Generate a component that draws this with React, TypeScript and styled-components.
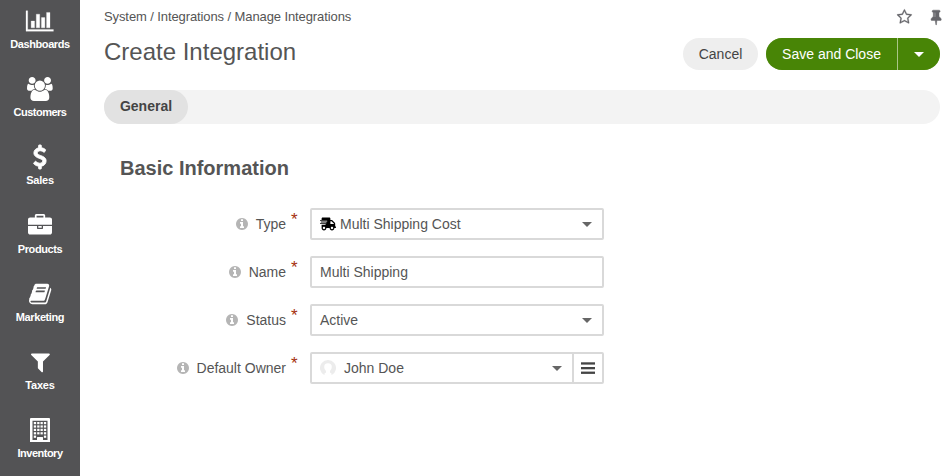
import React from 'react';
import styled, { createGlobalStyle } from 'styled-components';
import { FaShippingFast } from 'react-icons/fa';

const GlobalStyle = createGlobalStyle`
  * { box-sizing: border-box; }
  body { margin: 0; background: #fff; overflow: hidden; }
  body, button, input { font-family: "Liberation Sans", Arial, sans-serif; }
`;

/* Glyphs are drawn on a 1792-unit em square with the baseline at 1536. */
const glyphs = {
  chart: { w: 2048, d: 'M640 640v-512h-256v512h256zM1024 1152v-1024h-256v1024h256zM2048 0v-128h-2048v1536h128v-1408h1920zM1408 896v-768h-256v768h256zM1792 1280v-1152h-256v1152h256z' },
  users: { w: 1920, d: 'M593 640q-162 -5 -265 -128h-134q-82 0 -138 40.5t-56 118.5q0 353 124 353q6 0 43.5 -21t97.5 -42.5t119 -21.5q67 0 133 23q-5 -37 -5 -66q0 -139 81 -256zM1664 3q0 -120 -73 -189.5t-194 -69.5h-874q-121 0 -194 69.5t-73 189.5q0 53 3.5 103.5t14 109t26.5 108.5t43 97.5t62 81t85.5 53.5t111.5 20q10 0 43 -21.5t73 -48t107 -48t135 -21.5t135 21.5t107 48t73 48t43 21.5q61 0 111.5 -20t85.5 -53.5t62 -81t43 -97.5t26.5 -108.5t14 -109t3.5 -103.5zM640 1280q0 -106 -75 -181t-181 -75t-181 75t-75 181t75 181t181 75t181 -75t75 -181zM1344 896q0 -159 -112.5 -271.5t-271.5 -112.5t-271.5 112.5t-112.5 271.5t112.5 271.5t271.5 112.5t271.5 -112.5t112.5 -271.5zM1920 671q0 -78 -56 -118.5t-138 -40.5h-134q-103 123 -265 128q81 117 81 256q0 29 -5 66q66 -23 133 -23q59 0 119 21.5t97.5 42.5t43.5 21q124 0 124 -353zM1792 1280q0 -106 -75 -181t-181 -75t-181 75t-75 181t75 181t181 75t181 -75t75 -181z' },
  dollar: { w: 1024, d: 'M978 351q0 -153 -99.5 -263.5t-258.5 -136.5v-175q0 -14 -9 -23t-23 -9h-135q-13 0 -22.5 9.5t-9.5 22.5v175q-66 9 -127.5 31t-101.5 44.5t-74 48t-46.5 37.5t-17.5 18q-17 21 -2 41l103 135q7 10 23 12q15 2 24 -9l2 -2q113 -99 243 -125q37 -8 74 -8q81 0 142.5 43t61.5 122q0 28 -15 53t-33.5 42t-58.5 37.5t-66 32t-80 32.5q-39 16 -61.5 25t-61.5 26.5t-62.5 31t-56.5 35.5t-53.5 42.5t-43.5 49t-35.5 58t-21 66.5t-8.5 78q0 138 98 242t255 134v180q0 13 9.5 22.5t22.5 9.5h135q14 0 23 -9t9 -23v-176q57 -6 110.5 -23t87 -33.5t63.5 -37.5t39 -29t15 -14q17 -18 5 -38l-81 -146q-8 -15 -23 -16q-14 -3 -27 7q-3 3 -14.5 12t-39 26.5t-58.5 32t-74.5 26t-85.5 11.5q-95 0 -155 -43t-60 -111q0 -26 8.5 -48t29.5 -41.5t39.5 -33t56 -31t60.5 -27t70 -27.5q53 -20 81 -31.5t76 -35t75.5 -42.5t62 -50t53 -63.5t31.5 -76.5t13 -94z' },
  briefcase: { w: 1792, d: 'M640 1280h512v128h-512v-128zM1792 640v-480q0 -66 -47 -113t-113 -47h-1472q-66 0 -113 47t-47 113v480h672v-160q0 -26 19 -45t45 -19h320q26 0 45 19t19 45v160h672zM1024 640v-128h-256v128h256zM1792 1120v-384h-1792v384q0 66 47 113t113 47h352v160q0 40 28 68t68 28h576q40 0 68 -28t28 -68v-160h352q66 0 113 -47t47 -113z' },
  book: { w: 1664, d: 'M1639 1058q40 -57 18 -129l-275 -906q-19 -64 -76.5 -107.5t-122.5 -43.5h-923q-77 0 -148.5 53.5t-99.5 131.5q-24 67 -2 127q0 4 3 27t4 37q1 8 -3 21.5t-3 19.5q2 11 8 21t16.5 23.5t16.5 23.5q23 38 45 91.5t30 91.5q3 10 0.5 30t-0.5 28q3 11 17 28t17 23q21 36 42 92t25 90q1 9 -2.5 32t0.5 28q4 13 22 30.5t22 22.5q19 26 42.5 84.5t27.5 96.5q1 8 -3 25.5t-2 26.5q2 8 9 18t18 23t17 21q8 12 16.5 30.5t15 35t16 36t19.5 32t26.5 23.5t36 11.5t47.5 -5.5l-1 -3q38 9 51 9h761q74 0 114 -56t18 -130l-274 -906q-36 -119 -71.5 -153.5t-128.5 -34.5h-869q-27 0 -38 -15q-11 -16 -1 -43q24 -70 144 -70h923q29 0 56 15.5t35 41.5l300 987q7 22 5 57q38 -15 59 -43zM575 1056q-4 -13 2 -22.5t20 -9.5h608q13 0 25.5 9.5t16.5 22.5l21 64q4 13 -2 22.5t-20 9.5h-608q-13 0 -25.5 -9.5t-16.5 -22.5zM492 800q-4 -13 2 -22.5t20 -9.5h608q13 0 25.5 9.5t16.5 22.5l21 64q4 13 -2 22.5t-20 9.5h-608q-13 0 -25.5 -9.5t-16.5 -22.5z' },
  filter: { w: 1408, d: 'M1403 1241q17 -41 -14 -70l-493 -493v-742q0 -42 -39 -59q-13 -5 -25 -5q-27 0 -45 19l-256 256q-19 19 -19 45v486l-493 493q-31 29 -14 70q17 39 59 39h1280q42 0 59 -39z' },
  star: { w: 1664, d: 'M1137 532l306 297l-422 62l-189 382l-189 -382l-422 -62l306 -297l-73 -421l378 199l377 -199zM1664 889q0 -22 -26 -48l-363 -354l86 -500q1 -7 1 -20q0 -50 -41 -50q-19 0 -40 12l-449 236l-449 -236q-22 -12 -40 -12q-21 0 -31.5 14.5t-10.5 35.5q0 6 2 20l86 500l-364 354q-25 27 -25 48q0 37 56 46l502 73l225 455q19 41 49 41t49 -41l225 -455l502 -73q56 -9 56 -46z' },
  pin: { w: 1152, d: 'M480 672v448q0 14 -9 23t-23 9t-23 -9t-9 -23v-448q0 -14 9 -23t23 -9t23 9t9 23zM1152 320q0 -26 -19 -45t-45 -19h-429l-51 -483q-2 -12 -10.5 -20.5t-20.5 -8.5h-1q-27 0 -32 27l-76 485h-404q-26 0 -45 19t-19 45q0 123 78.5 221.5t177.5 98.5v512q-52 0 -90 38t-38 90t38 90t90 38h640q52 0 90 -38t38 -90t-38 -90t-90 -38v-512q99 0 177.5 -98.5t78.5 -221.5z' },
  info: { w: 1536, d: 'M1024 160v160q0 14 -9 23t-23 9h-96v512q0 14 -9 23t-23 9h-320q-14 0 -23 -9t-9 -23v-160q0 -14 9 -23t23 -9h96v-320h-96q-14 0 -23 -9t-9 -23v-160q0 -14 9 -23t23 -9h448q14 0 23 9t9 23zM896 1056v160q0 14 -9 23t-23 9h-192q-14 0 -23 -9t-9 -23v-160q0 -14 9 -23t23 -9h192q14 0 23 9t9 23zM1536 640q0 -209 -103 -385.5t-279.5 -279.5t-385.5 -103t-385.5 103t-279.5 279.5t-103 385.5t103 385.5t279.5 279.5t385.5 103t385.5 -103t279.5 -279.5t103 -385.5z' },
};
type GlyphName = keyof typeof glyphs;

const GlyphSvg = styled.svg<{ $weight: number }>`
  display: block;
  flex: none;
  fill: currentColor;
  stroke: currentColor;
  stroke-width: ${p => p.$weight};
  overflow: visible;
`;

function Glyph({ name, size, weight = 0 }: { name: GlyphName; size: number; weight?: number }) {
  const { w, d } = glyphs[name];
  return (
    <GlyphSvg $weight={weight} width={(w / 1792) * size} height={size} viewBox={`0 0 ${w} 1792`} aria-hidden>
      <path transform="translate(0 1536) scale(1 -1)" d={d} />
    </GlyphSvg>
  );
}

function Building() {
  return (
    <svg width="20" height="24" viewBox="0 0 20 24" fill="#fff" aria-hidden>
      <path fillRule="evenodd" d="M1 0h18q1 0 1 1v23q0 1-1 1H1q-1 0-1-1V1q0-1 1-1zM2.500 2.800v19.200H7v-2.500q0-.5.5-.5h5q.5 0 .5.5V22h4.500V2.800z" />
      {[4, 7.400, 10.800, 14.200].map(y =>
        [3.800, 7.200, 10.500, 13.900].map(x => <rect key={`${x}-${y}`} x={x} y={y} width="2.300" height="2.200" />),
      )}
      <rect x="3.800" y="17.600" width="2.300" height="2.200" />
      <rect x="13.900" y="17.600" width="2.300" height="2.200" />
    </svg>
  );
}

const Page = styled.div`
  display: flex;
  width: 951px;
  height: 476px;
  overflow: hidden;
  color: #444;
`;

const Sidebar = styled.nav`
  width: 80px;
  flex: none;
  background: #535355;
  padding-top: 9px;
`;

const NavItem = styled.a`
  display: flex;
  flex-direction: column;
  align-items: center;
  gap: 3px;
  height: 68.2px;
  color: #fff;
  font-size: 11px;
  font-weight: 700;
  line-height: 16px;
`;

const NavLabel = styled.span<{ $tracking: number }>`
  letter-spacing: ${p => p.$tracking}px;
`;

const Main = styled.main`
  flex: 1;
  min-width: 0;
  padding: 8px 9px 0 24px;
`;

const TopBar = styled.div`
  display: flex;
  justify-content: space-between;
  height: 18px;
`;

const Breadcrumb = styled.div`
  font-size: 13px;
  line-height: 17px;
  letter-spacing: -0.1px;
  color: #555;
  white-space: nowrap;
`;

const TopIcons = styled.div`
  display: flex;
  gap: 19px;
  padding: 1px 1px 0 0;
  color: #66666b;
`;

const TitleBar = styled.header`
  display: flex;
  justify-content: space-between;
  align-items: flex-start;
  padding: 12px 2px 0 0;
  height: 64px;
`;

const Title = styled.h1`
  margin: 0;
  font-size: 24px;
  font-weight: 400;
  line-height: 28px;
  color: #555;
`;

const Actions = styled.div`
  display: flex;
  gap: 8px;
`;

const Button = styled.button<{ $primary?: boolean; $width: number; $side?: 'left' | 'right' }>`
  display: flex;
  align-items: center;
  justify-content: center;
  width: ${p => p.$width}px;
  height: 32px;
  padding: 0;
  border: 0;
  border-radius: ${p => (p.$side === 'left' ? '16px 0 0 16px' : p.$side === 'right' ? '0 16px 16px 0' : '16px')};
  background: ${p => (p.$primary ? '#488506' : '#eee')};
  color: ${p => (p.$primary ? '#fff' : '#444')};
  font-size: 14px;
  line-height: 32px;
`;

const ButtonGroup = styled.div`
  display: flex;
  gap: 1px;
  border-radius: 16px;
  background: #a9c687;
`;

const Caret = styled.span`
  width: 0;
  height: 0;
  border: 5px solid transparent;
  border-top-color: currentColor;
  border-bottom: 0;
`;

const Tabs = styled.div`
  height: 34px;
  margin-right: 2px;
  border-radius: 17px;
  background: #f3f3f3;
`;

const Tab = styled.div`
  width: 84px;
  height: 34px;
  border-radius: 17px;
  background: #e2e2e2;
  color: #444;
  font-size: 14px;
  font-weight: 700;
  line-height: 32px;
  text-align: center;
`;

const Section = styled.section`
  padding: 30px 16px 0;
`;

const SectionTitle = styled.h2`
  margin: 0 0 26px;
  font-size: 20px;
  line-height: 28px;
  color: #555;
`;

const Form = styled.div`
  display: grid;
  gap: 16px;
`;

const Row = styled.div`
  display: flex;
  height: 32px;
`;

const Label = styled.label`
  display: flex;
  align-items: center;
  justify-content: flex-end;
  width: 178px;
  margin-right: 12px;
  font-size: 14px;
  color: #555;
`;

const InfoMark = styled.span`
  margin-right: 8px;
  color: #b5b5b5;
`;

const Required = styled.span`
  align-self: flex-start;
  width: 8px;
  margin-left: 4px;
  padding: 2px 0 0 1px;
  font-size: 17px;
  line-height: 20px;
  color: #a6300f;
`;

const Control = styled.div`
  display: flex;
  width: 294px;
  border: 2px solid #d9d9d9;
  border-radius: 2px;
`;

const Value = styled.div`
  display: flex;
  flex: 1;
  align-items: center;
  padding: 0 10px 0 8px;
  font-size: 14px;
  color: #555;
`;

const ValueText = styled.span`
  flex: 1;
`;

const ValueIcon = styled.span<{ $gap: number }>`
  display: flex;
  margin-right: ${p => p.$gap}px;
  color: #000;
`;

const CaretTone = styled.span`
  display: flex;
  color: #666;
`;

const ListButton = styled.div`
  display: flex;
  align-items: center;
  justify-content: center;
  width: 30px;
  border-left: 2px solid #d9d9d9;
`;

function Avatar() {
  return (
    <svg width="16" height="16" viewBox="0 0 16 16" aria-hidden>
      <path
        d="M4.500 15.200A8 8 0 1 1 11.500 15.200V13.500L10 12.500V11Q11.800 9.500 11.800 7Q11.800 3.300 8 3.300Q4.200 3.300 4.200 7Q4.200 9.500 6 11V12.500L4.500 13.500z"
        fill="#ececec"
      />
    </svg>
  );
}

const navItems: { label: string; icon: React.ReactNode; tracking: number }[] = [
  { label: 'Dashboards', icon: <Glyph name="chart" size={24} weight={20} />, tracking: -0.4 },
  { label: 'Customers', icon: <Glyph name="users" size={24} />, tracking: -0.5 },
  { label: 'Sales', icon: <Glyph name="dollar" size={24} weight={70} />, tracking: -0.2 },
  { label: 'Products', icon: <Glyph name="briefcase" size={24} />, tracking: -0.4 },
  { label: 'Marketing', icon: <Glyph name="book" size={24} />, tracking: -0.4 },
  { label: 'Taxes', icon: <Glyph name="filter" size={24} />, tracking: -0.2 },
  { label: 'Inventory', icon: <Building />, tracking: -0.5 },
];

interface FieldProps {
  label: string;
  value: string;
  icon?: React.ReactNode;
  iconGap?: number;
  select?: boolean;
  list?: boolean;
}

function Field({ label, value, icon, iconGap = 4, select, list }: FieldProps) {
  return (
    <Row>
      <Label>
        <InfoMark><Glyph name="info" size={14} /></InfoMark>
        {label}
        <Required>*</Required>
      </Label>
      <Control>
        <Value>
          {icon && <ValueIcon $gap={iconGap}>{icon}</ValueIcon>}
          <ValueText>{value}</ValueText>
          {select && <CaretTone><Caret /></CaretTone>}
        </Value>
        {list && (
          <ListButton>
            <svg width="14" height="12" viewBox="0 0 14 12" fill="#444" aria-hidden>
              <rect width="14" height="2.300" y="0.300" />
              <rect width="14" height="2.300" y="5" />
              <rect width="14" height="2.300" y="9.600" />
            </svg>
          </ListButton>
        )}
      </Control>
    </Row>
  );
}

export default function App() {
  return (
    <>
      <GlobalStyle />
      <Page>
        <Sidebar>
          {navItems.map(item => (
            <NavItem key={item.label}>
              {item.icon}
              <NavLabel $tracking={item.tracking}>{item.label}</NavLabel>
            </NavItem>
          ))}
        </Sidebar>
        <Main>
          <TopBar>
            <Breadcrumb>System / Integrations / Manage Integrations</Breadcrumb>
            <TopIcons>
              <Glyph name="star" size={16} weight={30} />
              <Glyph name="pin" size={16} weight={50} />
            </TopIcons>
          </TopBar>
          <TitleBar>
            <Title>Create Integration</Title>
            <Actions>
              <Button $width={75}>Cancel</Button>
              <ButtonGroup>
                <Button $primary $width={131} $side="left">Save and Close</Button>
                <Button $primary $width={42} $side="right" aria-label="More save options"><Caret /></Button>
              </ButtonGroup>
            </Actions>
          </TitleBar>
          <Tabs><Tab>General</Tab></Tabs>
          <Section>
            <SectionTitle>Basic Information</SectionTitle>
            <Form>
              <Field label="Type" value="Multi Shipping Cost" select icon={<FaShippingFast size={16} />} />
              <Field label="Name" value="Multi Shipping" />
              <Field label="Status" value="Active" select />
              <Field label="Default Owner" value="John Doe" select list icon={<Avatar />} iconGap={8} />
            </Form>
          </Section>
        </Main>
      </Page>
    </>
  );
}
